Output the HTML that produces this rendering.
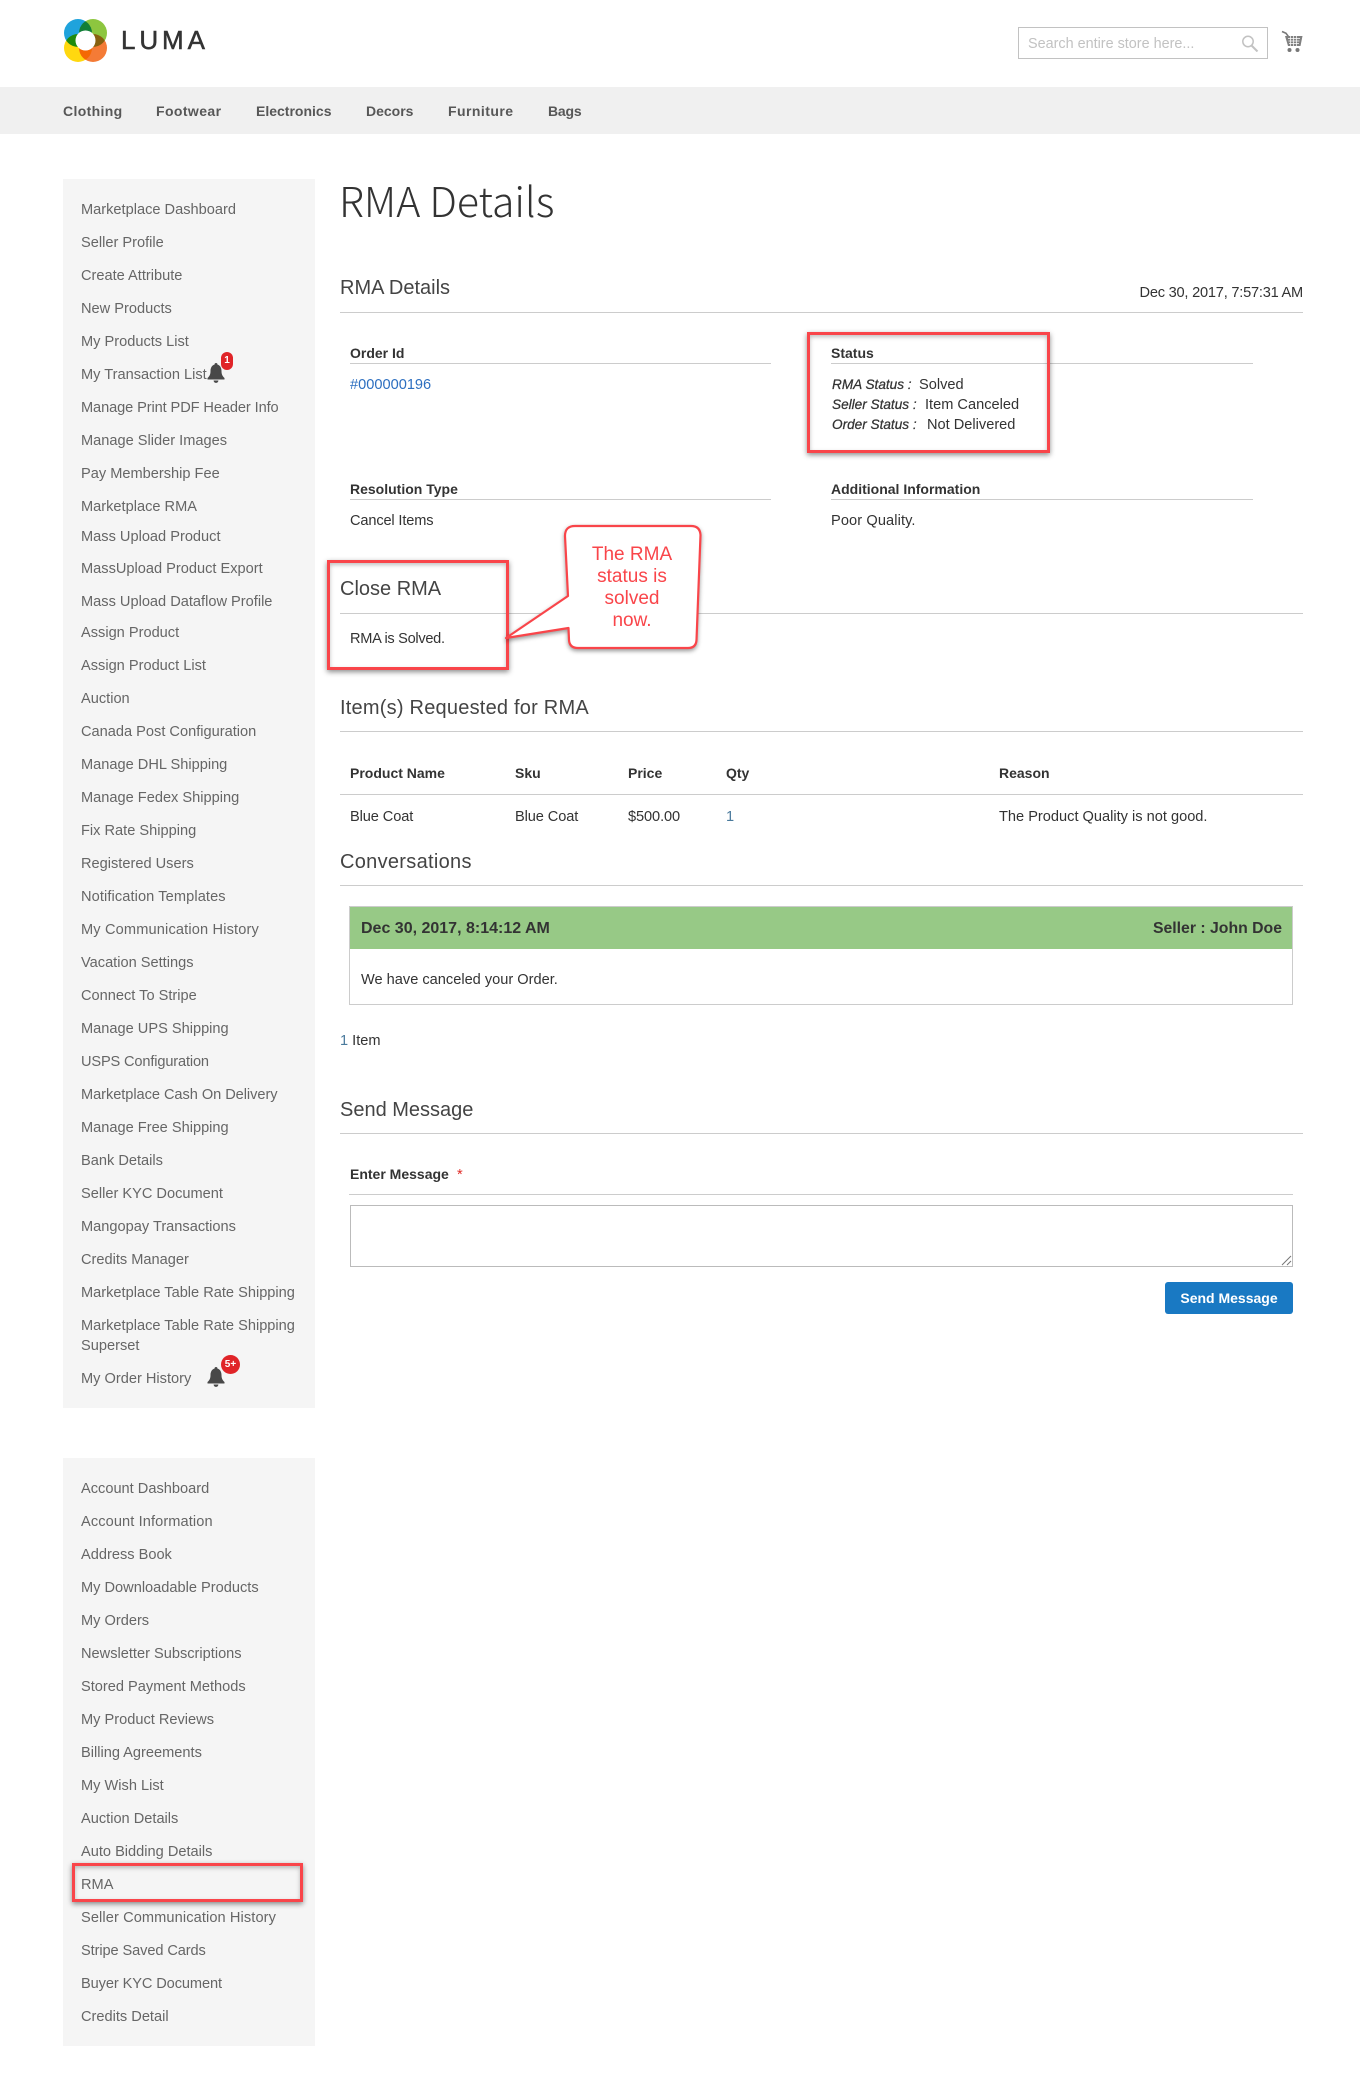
<!DOCTYPE html>
<html lang="en">
<head>
<meta charset="utf-8">
<title>RMA Details</title>
<style>
html,body{margin:0;padding:0;background:#fff}
body{position:relative;width:1360px;height:2080px;overflow:hidden;font-family:"Liberation Sans",Arial,sans-serif;font-size:14.6px;color:#333}
.a{position:absolute}
.t{position:absolute;line-height:20px;height:20px;white-space:nowrap;transform:translateY(1px)}
.s{position:absolute;left:81px;line-height:20px;height:20px;white-space:nowrap;color:#666;transform:translateY(1px)}
.b{font-weight:bold;font-size:14px;transform:none}
.h{position:absolute;left:340px;font-size:20px;line-height:28px;height:28px;white-space:nowrap;color:#444}
.l{position:absolute;height:1px;background:#ccc}
.r{position:absolute;border:3px solid #f9454a;box-sizing:border-box;box-shadow:0 2px 5px rgba(0,0,0,.45),inset 0 2px 4px rgba(0,0,0,.25)}
.i{font-style:italic;font-size:13.6px;-webkit-text-stroke:.25px #333}
</style>
</head>
<body>
<!-- header -->
<svg class="a" style="left:62px;top:17px;isolation:isolate" width="48" height="48" viewBox="0 0 48 48">
<circle cx="16" cy="16" r="14" fill="#1fa3dc" style="mix-blend-mode:multiply"/>
<circle cx="31" cy="16" r="14" fill="#8dc63f" style="mix-blend-mode:multiply"/>
<circle cx="16" cy="31" r="14" fill="#ffd80f" style="mix-blend-mode:multiply"/>
<circle cx="31" cy="31" r="14" fill="#f47b36" style="mix-blend-mode:multiply"/>
<circle cx="23.500" cy="23.500" r="10" fill="#fff"/>
</svg>
<div class="t" style="left:121px;top:25px;height:30px;line-height:30px;font-size:26px;letter-spacing:3.900px;color:#333;-webkit-text-stroke:.5px #333;transform:none">LUMA</div>

<div class="a" style="left:1018px;top:27px;width:250px;height:32px;border:1px solid #c2c2c2;box-sizing:border-box"></div>
<div class="t" style="left:1028px;top:33px;color:#c2c2c2;font-size:14.400px">Search entire store here...</div>
<svg class="a" style="left:1241px;top:35px" width="18" height="17" viewBox="0 0 18 17" fill="none" stroke="#c2c2c2" stroke-width="1.500"><circle cx="7" cy="6.500" r="5.200"/><path d="M10.500 10.500l6 6" stroke-width="2"/></svg>
<svg class="a" style="left:1281px;top:30px" width="22" height="24" viewBox="0 0 22 24"><path d="M1 1.500l4 1.800 3 4" fill="none" stroke="#777" stroke-width="1.600"/><path d="M4 6h17.500l-2 10H7z" fill="#808080"/><path d="M7 8.500h12M7.500 11h11M8 13.500h10M9.500 6v10M12.500 6v10M15.500 6v10" stroke="#fff" stroke-width=".7" fill="none"/><circle cx="8.500" cy="20" r="2" fill="#777"/><circle cx="16.500" cy="20" r="2" fill="#777"/></svg>

<!-- nav -->
<div class="a" style="left:0;top:87px;width:1360px;height:47px;background:#f0f0f0"></div>
<div class="t b" style="left:63px;top:101px;color:#575757;letter-spacing:.35px">Clothing</div>
<div class="t b" style="left:156px;top:101px;color:#575757;letter-spacing:.4px">Footwear</div>
<div class="t b" style="left:256px;top:101px;color:#575757">Electronics</div>
<div class="t b" style="left:366px;top:101px;color:#575757">Decors</div>
<div class="t b" style="left:448px;top:101px;color:#575757;letter-spacing:.45px">Furniture</div>
<div class="t b" style="left:548px;top:101px;color:#575757;letter-spacing:-.2px">Bags</div>

<!-- sidebars -->
<div class="a" style="left:63px;top:179px;width:252px;height:1229px;background:#f5f5f5"></div>
<div class="a" style="left:63px;top:1458px;width:252px;height:588px;background:#f5f5f5"></div>

<div class="s" style="top:199px">Marketplace Dashboard</div>
<div class="s" style="top:232px">Seller Profile</div>
<div class="s" style="top:265px">Create Attribute</div>
<div class="s" style="top:298px">New Products</div>
<div class="s" style="top:331px">My Products List</div>
<div class="s" style="top:364px">My Transaction List</div>
<div class="s" style="top:397px;letter-spacing:-.1px">Manage Print PDF Header Info</div>
<div class="s" style="top:430px">Manage Slider Images</div>
<div class="s" style="top:463px">Pay Membership Fee</div>
<div class="s" style="top:496px">Marketplace RMA</div>
<div class="s" style="top:526px">Mass Upload Product</div>
<div class="s" style="top:558px">MassUpload Product Export</div>
<div class="s" style="top:591px">Mass Upload Dataflow Profile</div>
<div class="s" style="top:622px">Assign Product</div>
<div class="s" style="top:655px">Assign Product List</div>
<div class="s" style="top:688px">Auction</div>
<div class="s" style="top:721px">Canada Post Configuration</div>
<div class="s" style="top:754px">Manage DHL Shipping</div>
<div class="s" style="top:787px">Manage Fedex Shipping</div>
<div class="s" style="top:820px">Fix Rate Shipping</div>
<div class="s" style="top:853px">Registered Users</div>
<div class="s" style="top:886px;letter-spacing:.1px">Notification Templates</div>
<div class="s" style="top:919px;letter-spacing:.15px">My Communication History</div>
<div class="s" style="top:952px">Vacation Settings</div>
<div class="s" style="top:985px">Connect To Stripe</div>
<div class="s" style="top:1018px">Manage UPS Shipping</div>
<div class="s" style="top:1051px;letter-spacing:-.15px">USPS Configuration</div>
<div class="s" style="top:1084px;letter-spacing:-.05px">Marketplace Cash On Delivery</div>
<div class="s" style="top:1117px">Manage Free Shipping</div>
<div class="s" style="top:1150px">Bank Details</div>
<div class="s" style="top:1183px">Seller KYC Document</div>
<div class="s" style="top:1216px">Mangopay Transactions</div>
<div class="s" style="top:1249px">Credits Manager</div>
<div class="s" style="top:1282px">Marketplace Table Rate Shipping</div>
<div class="s" style="top:1315px">Marketplace Table Rate Shipping</div>
<div class="s" style="top:1335px">Superset</div>
<div class="s" style="top:1368px">My Order History</div>

<svg class="a" style="left:207px;top:363px" width="18" height="20" viewBox="0 0 18 20"><path fill="#484848" d="M9 0a1.400 1.400 0 0 1 1.400 1.500C13 2.300 14.500 4.700 14.500 8c0 3.500 1 5.200 3 7v1.500H.5V15c2-1.800 3-3.500 3-7 0-3.300 1.500-5.700 4.100-6.500A1.400 1.400 0 0 1 9 0zM6.600 17.500h4.800a2.400 2.400 0 0 1-4.800 0z"/></svg>
<div class="a" style="left:221px;top:352px;width:12px;height:18px;border-radius:6px;background:#e02428;color:#fff;font-weight:bold;font-size:10px;line-height:18px;text-align:center">1</div>

<svg class="a" style="left:207px;top:1367px" width="18" height="20" viewBox="0 0 18 20"><path fill="#484848" d="M9 0a1.400 1.400 0 0 1 1.400 1.500C13 2.300 14.500 4.700 14.500 8c0 3.500 1 5.200 3 7v1.500H.5V15c2-1.800 3-3.500 3-7 0-3.300 1.500-5.700 4.100-6.500A1.400 1.400 0 0 1 9 0zM6.600 17.500h4.800a2.400 2.400 0 0 1-4.800 0z"/></svg>
<div class="a" style="left:221px;top:1355px;width:19px;height:19px;border-radius:50%;background:#e02428;color:#fff;font-weight:bold;font-size:10px;line-height:19px;text-align:center">5+</div>

<div class="s" style="top:1478px">Account Dashboard</div>
<div class="s" style="top:1511px;letter-spacing:.1px">Account Information</div>
<div class="s" style="top:1544px">Address Book</div>
<div class="s" style="top:1577px">My Downloadable Products</div>
<div class="s" style="top:1610px">My Orders</div>
<div class="s" style="top:1643px">Newsletter Subscriptions</div>
<div class="s" style="top:1676px">Stored Payment Methods</div>
<div class="s" style="top:1709px">My Product Reviews</div>
<div class="s" style="top:1742px">Billing Agreements</div>
<div class="s" style="top:1775px">My Wish List</div>
<div class="s" style="top:1808px">Auction Details</div>
<div class="s" style="top:1841px">Auto Bidding Details</div>
<div class="s" style="top:1874px">RMA</div>
<div class="s" style="top:1907px;letter-spacing:.1px">Seller Communication History</div>
<div class="s" style="top:1940px;letter-spacing:-.1px">Stripe Saved Cards</div>
<div class="s" style="top:1973px;letter-spacing:-.1px">Buyer KYC Document</div>
<div class="s" style="top:2006px">Credits Detail</div>
<div class="r" style="left:72px;top:1863px;width:231px;height:39px"></div>

<!-- main -->
<div class="t" style="left:339px;top:174px;height:50px;line-height:50px;font-family:'Noto Sans CJK JP','Liberation Sans',sans-serif;font-weight:300;font-size:41px;color:#333;transform:none">RMA Details</div>

<div class="h" style="top:274px">RMA Details</div>
<div class="t" style="right:57px;top:282px;letter-spacing:-.22px">Dec 30, 2017, 7:57:31 AM</div>
<div class="l" style="left:340px;top:312px;width:963px"></div>

<div class="t b" style="left:350px;top:343px;font-size:14px">Order Id</div>
<div class="l" style="left:350px;top:363px;width:421px"></div>
<div class="t" style="left:350px;top:374px;color:#2d6fc0">#000000196</div>

<div class="t b" style="left:831px;top:343px">Status</div>
<div class="l" style="left:831px;top:363px;width:422px"></div>
<div class="t i" style="left:832px;top:374px">RMA Status :</div>
<div class="t" style="left:919px;top:374px">Solved</div>
<div class="t i" style="left:832px;top:394px">Seller Status :</div>
<div class="t" style="left:925px;top:394px">Item Canceled</div>
<div class="t i" style="left:832px;top:414px">Order Status :</div>
<div class="t" style="left:927px;top:414px">Not Delivered</div>
<div class="r" style="left:807px;top:332px;width:243px;height:121px"></div>

<div class="t b" style="left:350px;top:479px">Resolution Type</div>
<div class="l" style="left:350px;top:499px;width:421px"></div>
<div class="t" style="left:350px;top:510px;letter-spacing:-.15px">Cancel Items</div>
<div class="t b" style="left:831px;top:479px">Additional Information</div>
<div class="l" style="left:831px;top:499px;width:422px"></div>
<div class="t" style="left:831px;top:510px;letter-spacing:.1px">Poor Quality.</div>

<div class="h" style="top:575px">Close RMA</div>
<div class="l" style="left:340px;top:613px;width:963px"></div>
<div class="t" style="left:350px;top:628px;letter-spacing:-.3px">RMA is Solved.</div>
<div class="r" style="left:327px;top:560px;width:182px;height:110px"></div>

<svg class="a" style="left:500px;top:520px;filter:drop-shadow(0 2px 2px rgba(0,0,0,.4))" width="210" height="140" viewBox="0 0 210 140">
<path d="M75 6H191Q200 6 200.500 15L196.500 120Q196 128 188 128H78Q69.500 128 69 120L68.500 108L6 118L68 76L65 16Q65 6 75 6z" fill="#fff" stroke="#f9454a" stroke-width="2.200" stroke-linejoin="round"/>
</svg>
<div class="a" style="left:566px;top:544px;width:132px;text-align:center;color:#f9454a;font-size:19px;line-height:22px">The RMA<br>status is<br>solved<br>now.</div>

<div class="h" style="top:694px;letter-spacing:.22px">Item(s) Requested for RMA</div>
<div class="l" style="left:340px;top:731px;width:963px"></div>
<div class="t b" style="left:350px;top:763px">Product Name</div>
<div class="t b" style="left:515px;top:763px">Sku</div>
<div class="t b" style="left:628px;top:763px">Price</div>
<div class="t b" style="left:726px;top:763px">Qty</div>
<div class="t b" style="left:999px;top:763px">Reason</div>
<div class="l" style="left:340px;top:794px;width:963px"></div>
<div class="t" style="left:350px;top:806px;letter-spacing:-.1px">Blue Coat</div>
<div class="t" style="left:515px;top:806px;letter-spacing:-.1px">Blue Coat</div>
<div class="t" style="left:628px;top:806px;letter-spacing:-.1px">$500.00</div>
<div class="t" style="left:726px;top:806px;color:#4a7a9c">1</div>
<div class="t" style="left:999px;top:806px">The Product Quality is not good.</div>

<div class="h" style="top:848px;letter-spacing:.3px">Conversations</div>
<div class="l" style="left:340px;top:885px;width:963px"></div>

<div class="a" style="left:349px;top:906px;width:944px;height:99px;border:1px solid #ccc;box-sizing:border-box"></div>
<div class="a" style="left:350px;top:907px;width:942px;height:42px;background:#97c986"></div>
<div class="t" style="left:361px;top:918px;font-weight:bold;font-size:16px">Dec 30, 2017, 8:14:12 AM</div>
<div class="t" style="right:78px;top:918px;font-weight:bold;font-size:15.800px">Seller : John Doe</div>
<div class="t" style="left:361px;top:969px">We have canceled your Order.</div>

<div class="t" style="left:340px;top:1030px"><span style="color:#4a7a9c">1</span> Item</div>

<div class="h" style="top:1096px">Send Message</div>
<div class="l" style="left:340px;top:1133px;width:963px"></div>
<div class="t b" style="left:350px;top:1164px">Enter Message</div>
<div class="t" style="left:457px;top:1164px;color:#e02b27">*</div>
<div class="l" style="left:349px;top:1194px;width:944px"></div>
<div class="a" style="left:350px;top:1205px;width:943px;height:62px;border:1px solid #bbb;box-sizing:border-box"></div>
<svg class="a" style="left:1281px;top:1255px" width="11" height="11" viewBox="0 0 11 11"><path d="M1 10L10 1M6 10L10 6" stroke="#777" stroke-width="1"/></svg>
<div class="a" style="left:1165px;top:1282px;width:128px;height:32px;background:#1979c3;border-radius:3px;color:#fff;font-weight:bold;font-size:14px;line-height:32px;text-align:center">Send Message</div>
</body>
</html>
